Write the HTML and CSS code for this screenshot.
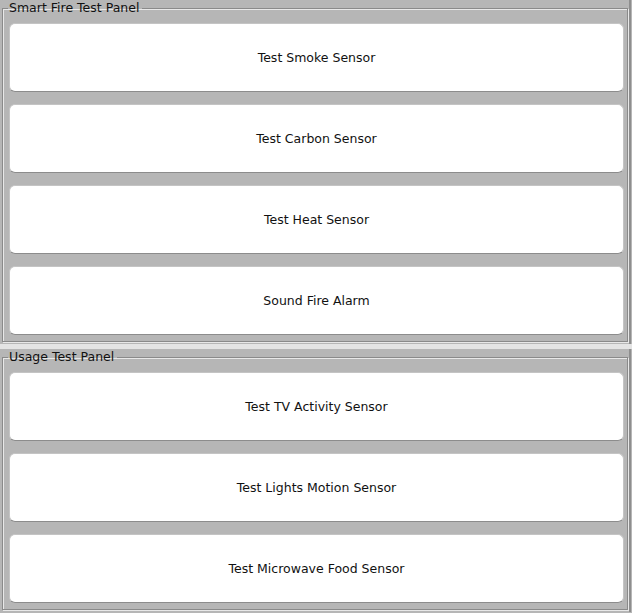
FILE: index.html
```html
<!DOCTYPE html>
<html lang="en">

<head>
    <meta charset="UTF-8">
    <meta name="viewport" content="width=device-width, initial-scale=1.0">
    <title>Test Panels</title>
    <link rel="stylesheet" href="styles.css">
</head>

<body>
    <div class="panel">
        <fieldset class="group">
            <legend>Smart Fire Test Panel</legend>
            <button class="btn">Test Smoke Sensor</button>
            <button class="btn">Test Carbon Sensor</button>
            <button class="btn">Test Heat Sensor</button>
            <button class="btn">Sound Fire Alarm</button>
        </fieldset>
    </div>
    <div class="split"></div>
    <div class="panel">
        <fieldset class="group">
            <legend>Usage Test Panel</legend>
            <button class="btn">Test TV Activity Sensor</button>
            <button class="btn">Test Lights Motion Sensor</button>
            <button class="btn">Test Microwave Food Sensor</button>
        </fieldset>
    </div>
</body>

</html>
```

FILE: styles.css
```css
* {
    margin: 0;
    padding: 0;
    box-sizing: border-box;
}

body {
    background: #b6b6b6;
    font-family: "DejaVu Sans", "Liberation Sans", sans-serif;
    color: #111;
    height: 613px;
    overflow: hidden;
}

.panel {
    padding: 0 1px 2px 2px;
    border-right: 2px solid #8e8e8e;
    margin-right: 1px;
}

.split {
    height: 5px;
    background: #e4e4e4;
}

.group {
    border: 1px solid #8a8a8a;
    box-shadow: 1px 1px 0 #e8e8e8, inset 1px 1px 0 #e8e8e8;
    padding: 7px 3px 6px 6px;
    display: flex;
    flex-direction: column;
    gap: 12px;
}

.group legend {
    font-size: 12.5px;
    line-height: 16px;
    padding: 0 3px 0 1px;
    margin-left: -1px;
    color: #111;
}

.btn {
    height: 69px;
    background: #fff;
    border: 1px solid #c4c4c4;
    border-bottom-color: #8c8c8c;
    border-radius: 6px;
    font-family: inherit;
    font-size: 12.5px;
    color: #111;
    cursor: pointer;
}
```
